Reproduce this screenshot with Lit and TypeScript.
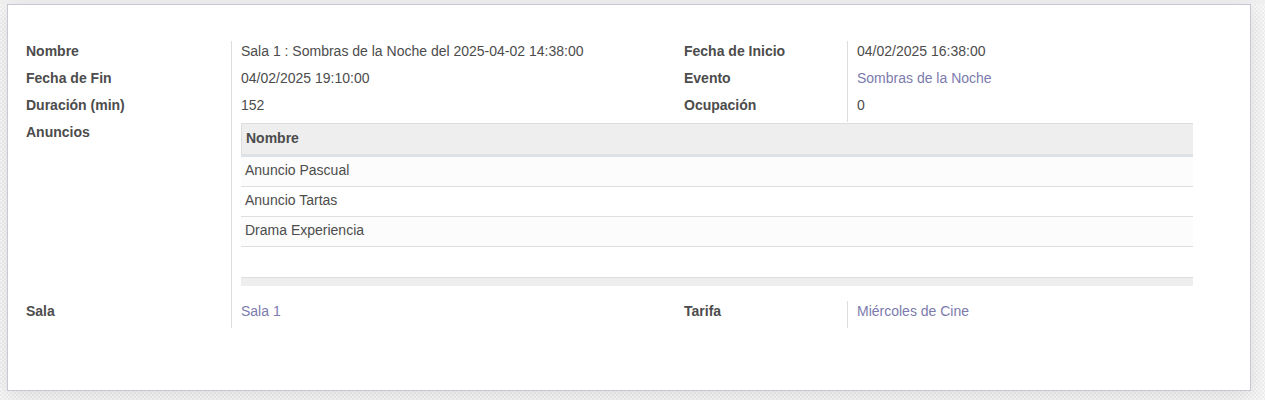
import { LitElement, html, css } from "lit";
import { customElement, property } from "lit/decorators.js";

@customElement("ad-list")
class AdList extends LitElement {
  static styles = css`
    :host {
      display: block;
    }
    .list {
      width: 100%;
      border-collapse: separate;
      border-spacing: 0;
      color: #4c4c4c;
    }
    .head {
      padding: 4px 4px 6px;
      height: 20px;
      background: #eeeeee;
      border-top: 1px solid #dddddd;
      border-left: 1px solid #dddddd;
      border-bottom: 3px solid #dee2e6;
      text-align: left;
      line-height: 20px;
    }
    .cell {
      height: 20px;
      padding: 3px 4px 6px;
      border-bottom: 1px solid #dfdfe3;
      line-height: 20px;
    }
    .row:nth-child(odd) .cell {
      background: #fcfcfc;
    }
    .row.blank .cell {
      height: 21px;
      background: none;
    }
    .foot {
      height: 8px;
      padding: 0;
      background: #eeeeee;
    }
  `;

  @property({ attribute: false }) ads: string[] = [];

  render() {
    return html`
      <table class="list">
        <thead>
          <tr><th class="head" scope="col">Nombre</th></tr>
        </thead>
        <tbody>
          ${this.ads.map((ad) => html`<tr class="row"><td class="cell">${ad}</td></tr>`)}
          <tr class="row blank"><td class="cell"></td></tr>
        </tbody>
        <tfoot>
          <tr><td class="foot"></td></tr>
        </tfoot>
      </table>
    `;
  }
}

@customElement("app-root")
class AppRoot extends LitElement {
  static styles = css`
    :host {
      display: flow-root;
      min-height: 100vh;
      box-sizing: border-box;
      padding: 0 14px 0 7px;
      overflow: hidden;
      background: repeating-conic-gradient(#eeeeee 0 25%, #f8f8f8 0 50%) 0 0 / 4px 4px;
      color: #4c4c4c;
      font: 14px/20px "Liberation Sans", Arial, sans-serif;
    }
    .bar {
      height: 4px;
      margin: 0 -14px 0 -7px;
      background: #f0f0f0;
    }
    .sheet {
      padding: 36px 57px 62px 18px;
      border: 1px solid #c8c8d3;
      background: #ffffff;
      box-shadow: 0 5px 20px rgba(0, 0, 0, 0.1);
    }
    .fields {
      display: grid;
      grid-template-columns: 205fr 453fr 163fr 346fr;
      margin: 0;
    }
    .label {
      padding: 0 8px 7px 0;
      font-weight: bold;
    }
    .value {
      margin: 0;
      padding: 0 0 7px 9px;
      border-left: 1px solid #dddddd;
    }
    .value.wide {
      grid-column: span 3;
      padding-top: 1px;
      padding-bottom: 15px;
    }
    .link {
      color: #7c7bad;
      text-decoration: none;
    }
  `;

  render() {
    return html`
      <div class="bar"></div>
      <main class="sheet">
        <dl class="fields">
          <dt class="label">Nombre</dt>
          <dd class="value">Sala 1 : Sombras de la Noche del 2025-04-02 14:38:00</dd>
          <dt class="label">Fecha de Inicio</dt>
          <dd class="value">04/02/2025 16:38:00</dd>

          <dt class="label">Fecha de Fin</dt>
          <dd class="value">04/02/2025 19:10:00</dd>
          <dt class="label">Evento</dt>
          <dd class="value"><a class="link" href="#evento">Sombras de la Noche</a></dd>

          <dt class="label">Duración (min)</dt>
          <dd class="value">152</dd>
          <dt class="label">Ocupación</dt>
          <dd class="value">0</dd>

          <dt class="label">Anuncios</dt>
          <dd class="value wide">
            <ad-list .ads=${["Anuncio Pascual", "Anuncio Tartas", "Drama Experiencia"]}></ad-list>
          </dd>

          <dt class="label">Sala</dt>
          <dd class="value"><a class="link" href="#sala">Sala 1</a></dd>
          <dt class="label">Tarifa</dt>
          <dd class="value"><a class="link" href="#tarifa">Miércoles de Cine</a></dd>
        </dl>
      </main>
    `;
  }
}
